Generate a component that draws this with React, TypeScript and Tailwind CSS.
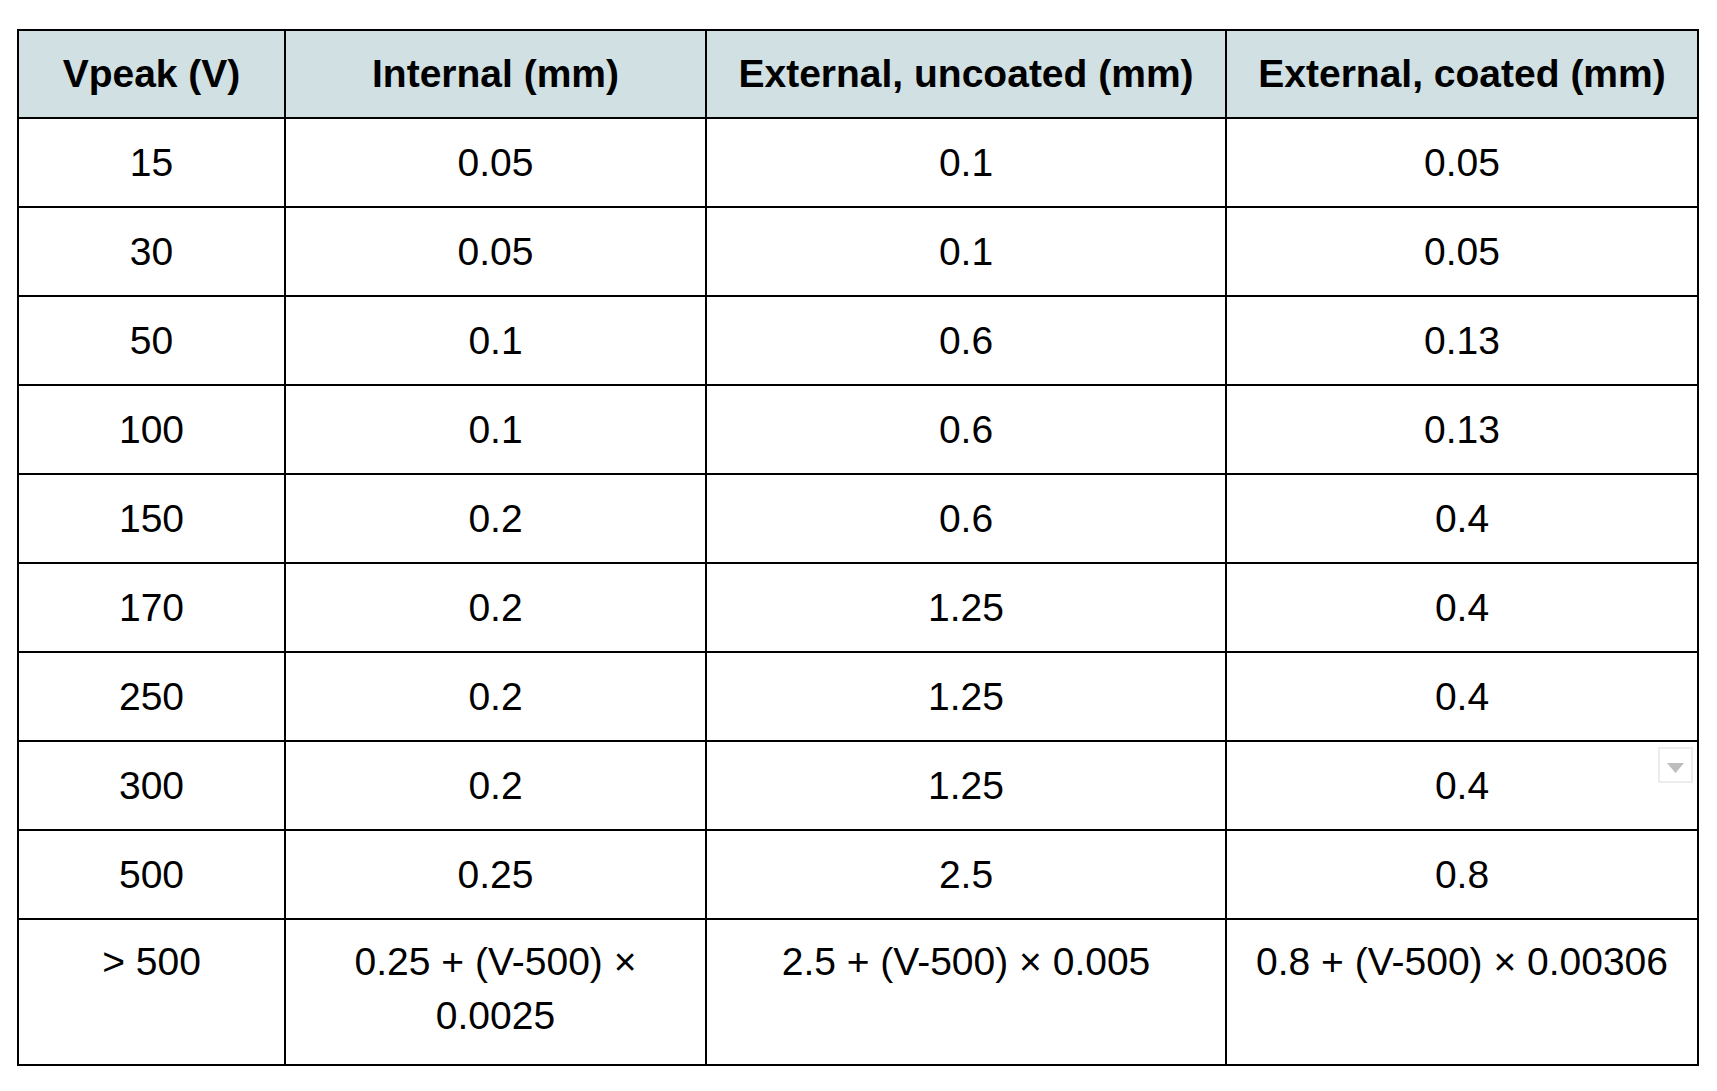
import React from "react";

const rows: [string, string, string, string][] = [
  ["15", "0.05", "0.1", "0.05"],
  ["30", "0.05", "0.1", "0.05"],
  ["50", "0.1", "0.6", "0.13"],
  ["100", "0.1", "0.6", "0.13"],
  ["150", "0.2", "0.6", "0.4"],
  ["170", "0.2", "1.25", "0.4"],
  ["250", "0.2", "1.25", "0.4"],
  ["300", "0.2", "1.25", "0.4"],
  ["500", "0.25", "2.5", "0.8"],
];

const headers = ["Vpeak (V)", "Internal (mm)", "External, uncoated (mm)", "External, coated (mm)"];

function DropdownChip() {
  return (
    <div className="absolute right-[4px] top-[5px] w-[35px] h-[36px] border-2 border-[#ececec] bg-white flex items-start justify-center">
      <svg width="17" height="10" viewBox="0 0 17 10" className="mt-[14px]">
        <polygon points="0,0 17,0 8.5,10" fill="#bdbdbd" />
      </svg>
    </div>
  );
}

export default function App() {
  return (
    <div className="w-[1717px] h-[1091px] bg-white pl-[17px] pt-[29px] font-['Liberation_Sans',Arial,sans-serif] text-black text-[39px] leading-[54px]">
      <div className="inline-grid grid-cols-[265px_419px_518px_470px] gap-[2px] p-[2px] bg-black">
        {headers.map((h) => (
          <div key={h} className="h-[86px] bg-[#d0e0e3] flex items-center justify-center text-center font-bold whitespace-nowrap">
            {h}
          </div>
        ))}
        {rows.map((r, i) =>
          r.map((c, j) => (
            <div key={`${i}-${j}`} className="relative h-[87px] bg-white flex items-center justify-center text-center">
              {c}
              {i === 7 && j === 3 ? <DropdownChip /> : null}
            </div>
          ))
        )}
        <div className="h-[144px] bg-white text-center pt-[15px] px-[8px]">&gt; 500</div>
        <div className="h-[144px] bg-white text-center pt-[15px] px-[30px]">0.25 + (V-500) × 0.0025</div>
        <div className="h-[144px] bg-white text-center pt-[15px] px-[8px]">2.5 + (V-500) × 0.005</div>
        <div className="h-[144px] bg-white text-center pt-[15px] px-[8px] whitespace-nowrap">0.8 + (V-500) × 0.00306</div>
      </div>
    </div>
  );
}
